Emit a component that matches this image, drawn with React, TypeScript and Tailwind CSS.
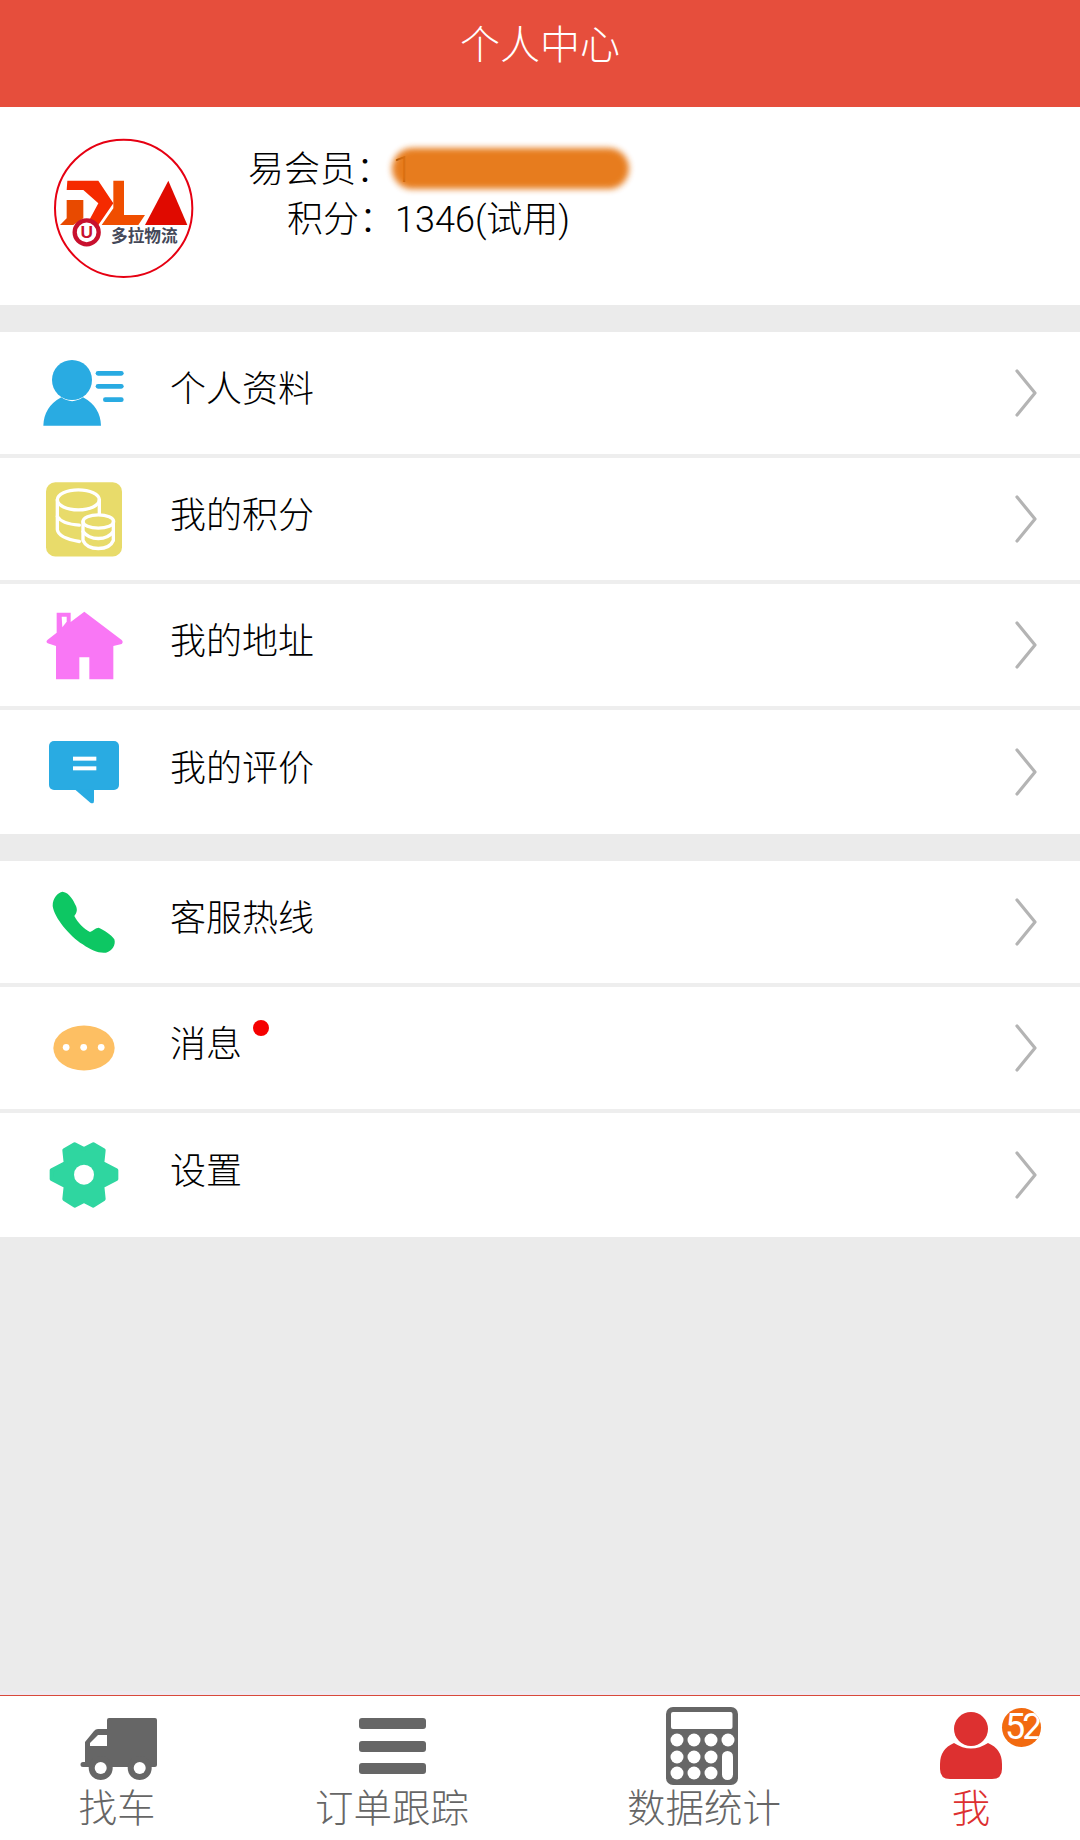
import React from "react";

const Chevron = () => (
  <svg width="24" height="50" viewBox="0 0 24 50" className="mr-[42px] shrink-0">
    <path d="M3 3L21 25L3 47" fill="none" stroke="#b4b4b4" strokeWidth="3.2" strokeLinecap="round" strokeLinejoin="round" />
  </svg>
);

const PersonIcon = () => (
  <svg width="82" height="66" viewBox="130 60 246 198">
    <circle cx="217" cy="120" r="60" fill="#29abe2" />
    <path d="M131 257Q133 200 185 172Q217 195 250 172Q302 200 304 257Z" fill="#29abe2" />
    <rect x="288" y="93" width="84" height="14" rx="7" fill="#29abe2" />
    <rect x="288" y="132" width="84" height="14" rx="7" fill="#29abe2" />
    <rect x="310" y="172" width="62" height="14" rx="7" fill="#29abe2" />
  </svg>
);

const CoinIcon = () => (
  <svg width="76" height="75" viewBox="138 427 228 224">
    <rect x="138" y="427" width="228" height="223" rx="28" fill="#e8db6a" />
    <g fill="none" stroke="#fff" strokeWidth="10" strokeLinecap="round">
      <ellipse cx="235" cy="480" rx="63" ry="30" />
      <path d="M172 480V570Q176 595 238 605" />
      <path d="M172 530Q185 552 238 556" />
      <path d="M298 480V520" />
      <ellipse cx="295" cy="545" rx="46" ry="20" />
      <path d="M249 545V602Q260 626 295 626Q330 626 340 602V545" />
      <path d="M249 575Q265 596 295 596Q325 596 340 575" />
    </g>
  </svg>
);

const HouseIcon = () => (
  <svg width="78" height="69" viewBox="135 813 234 207">
    <path
      d="M253 815L365 900Q371 906 365 912L340 918V1018H268V952H238V1018H168V918L143 910Q136 905 143 899L170 878V818H212V846Z"
      fill="#f977f5"
    />
    <path d="M185 830H200V845L187 862Z" fill="#fff" />
  </svg>
);

const BubbleIcon = () => (
  <svg width="70" height="63" viewBox="148 1203 210 189">
    <rect x="148" y="1203" width="210" height="147" rx="15" fill="#29abe2" />
    <path d="M225 1348L272 1388Q283 1394 283 1382V1348Z" fill="#29abe2" />
    <rect x="220" y="1250" width="70" height="12" fill="#fff" />
    <rect x="220" y="1279" width="70" height="12" fill="#fff" />
  </svg>
);

const PhoneIcon = () => (
  <svg width="64" height="63" viewBox="158 120 192 189">
    <path
      d="M190 122C175 125 160 140 160 165C165 200 210 255 250 280C275 298 300 308 320 305C340 300 350 280 345 265C335 250 315 238 298 230C290 230 280 240 272 243C255 235 235 215 225 195C232 185 235 178 230 165C222 148 210 125 190 122Z"
      fill="#0dc763"
    />
  </svg>
);

const MessageIcon = () => (
  <svg width="62" height="46" viewBox="160 525 184 134">
    <ellipse cx="252" cy="592" rx="91" ry="67" fill="#fdbf63" />
    <circle cx="199" cy="590" r="10" fill="#fff" />
    <circle cx="251" cy="590" r="10" fill="#fff" />
    <circle cx="303" cy="590" r="10" fill="#fff" />
  </svg>
);

const GearIcon = () => (
  <svg width="70" height="67" viewBox="147 877 210 201">
    <path
      d="M252 898L224 884L193 902L197 940L155 962V988L197 1010L193 1048L224 1068L252 1054L280 1068L311 1048L307 1010L349 988V962L307 940L311 902L280 884Z"
      fill="#2fd6a0"
      stroke="#2fd6a0"
      strokeWidth="12"
      strokeLinejoin="round"
    />
    <circle cx="252" cy="975" r="30" fill="#fff" />
  </svg>
);

const Logo = () => (
  <svg width="180" height="170" viewBox="0 0 540 510" className="shrink-0">
    <circle cx="281" cy="250" r="206" fill="none" stroke="#e60012" strokeWidth="6" />
    <path d="M112 167H205L250 235L205 300H170L205 235L160 195H110Z" fill="#f52a00" />
    <path d="M110 225H160V280L130 300H90L110 280Z" fill="#e84a00" />
    <path d="M250 167H282V270H345L325 300H215L250 250Z" fill="#f04e00" />
    <path d="M415 167L472 300H345Z" fill="#e00a00" />
    <circle cx="170" cy="322" r="36" fill="#fff" stroke="#c8102e" strokeWidth="13" />
    <text x="170" y="340" textAnchor="middle" fontSize="52" fontWeight="700" fontFamily="Liberation Sans, sans-serif" fill="#c8102e">U</text>
    <text x="243" y="350" fontSize="50" fontWeight="700" fontFamily="Noto Sans CJK SC, sans-serif" fill="#444858">多拉物流</text>
  </svg>
);

type RowProps = { icon: React.ReactNode; label: string; dot?: boolean; h: string };

const Row = ({ icon, label, dot, h }: RowProps) => (
  <div className={`flex items-center bg-white ${h}`}>
    <div className="flex w-[168px] shrink-0 justify-center">{icon}</div>
    <div className="relative ml-[2px] flex-1 pb-[6px] text-[36px] leading-[46px] font-light text-black">
      {label}
      {dot && <span className="absolute left-[83px] top-[-2px] h-[16px] w-[16px] rounded-full bg-[#f50000]" />}
    </div>
    <Chevron />
  </div>
);

const Sep = () => <div className="h-[4px] bg-[#eeeeee]" />;

const Gap = () => <div className="h-[27px] bg-[#ebebeb]" />;

type TabProps = { w: string; label: string; active?: boolean; labelClass?: string; children: React.ReactNode };

const Tab = ({ w, label, active, labelClass, children }: TabProps) => (
  <div className={`flex flex-col items-center pt-[8px] ${w}`}>
    <div className="relative flex h-[86px] items-center justify-center">{children}</div>
    <div className={`text-[38.5px] leading-[38px] font-light ${labelClass ?? ""} ${active ? "text-[#dd3030]" : "text-[#666666]"}`}>{label}</div>
  </div>
);

export default function App() {
  return (
    <div className="flex h-[1840px] w-[1080px] flex-col overflow-hidden bg-[#ebebeb] font-[Roboto,'Noto_Sans_CJK_SC',sans-serif]">
      <div className="flex h-[107px] shrink-0 justify-center bg-[#e64e3c] pt-[22px] text-[40px] leading-[48px] font-light text-white">
        个人中心
      </div>

      <div className="flex h-[198px] shrink-0 items-start bg-white pl-[30px] pt-[18px]">
        <Logo />
        <div className="ml-[38px] pt-[20px] text-[36px] leading-[50px] font-light text-black">
          <div className="relative flex">
            <span className="w-[144px] text-right">易会员：</span>
            <span className="ml-[1px]">1</span>
            <span className="absolute left-[144px] top-[3px] h-[41px] w-[237px] rounded-full bg-[#e67612] opacity-95 blur-[3px]" />
          </div>
          <div className="flex">
            <span className="w-[147px] text-right">积分：</span>
            <span>1346(试用)</span>
          </div>
        </div>
      </div>

      <Gap />
      <Row h="h-[122px]" icon={<PersonIcon />} label="个人资料" />
      <Sep />
      <Row h="h-[122px]" icon={<CoinIcon />} label="我的积分" />
      <Sep />
      <Row h="h-[122px]" icon={<HouseIcon />} label="我的地址" />
      <Sep />
      <Row h="h-[124px]" icon={<BubbleIcon />} label="我的评价" />
      <Gap />
      <Row h="h-[122px]" icon={<PhoneIcon />} label="客服热线" />
      <Sep />
      <Row h="h-[122px]" icon={<MessageIcon />} label="消息" dot />
      <Sep />
      <Row h="h-[124px]" icon={<GearIcon />} label="设置" />

      <div className="flex-1 border-b-[4px] border-[#eeeaf0]" />

      <div className="flex h-[145px] shrink-0 border-t-[1px] border-[#d9483c] bg-white">
        <Tab w="w-[234px]" label="找车">
          <svg width="78" height="65" viewBox="0 0 78 65" className="ml-[3px] mt-[2px]">
            <path d="M29 2H75a2 2 0 0 1 2 2V49a2 2 0 0 1-2 2H3a2 2 0 0 1 0-5H5V26L14 15a5 5 0 0 1 4-2H27V4a2 2 0 0 1 2-2Z" fill="#666" />
            <path d="M27 19H18L10 27V30H27Z" fill="#fff" />
            <circle cx="20.7" cy="52" r="12" fill="#666" />
            <circle cx="20.7" cy="52" r="6" fill="#fff" />
            <circle cx="59.7" cy="52" r="12" fill="#666" />
            <circle cx="59.7" cy="52" r="6" fill="#fff" />
          </svg>
        </Tab>
        <Tab w="w-[316px]" label="订单跟踪">
          <svg width="67" height="56" viewBox="0 0 67 56" className="mb-[2px]">
            <rect width="67" height="11" rx="3" fill="#666" />
            <rect y="23" width="67" height="11" rx="3" fill="#666" />
            <rect y="45" width="67" height="11" rx="3" fill="#666" />
          </svg>
        </Tab>
        <Tab w="w-[304px]" label="数据统计" labelClass="pl-[4px]">
          <svg width="72" height="78" viewBox="0 0 72 78" className="mb-[2px]">
            <rect width="72" height="78" rx="7" fill="#666" />
            <rect x="5" y="5" width="61.5" height="17" rx="2" fill="#fff" />
            {[33, 50, 66].map((y) =>
              [11, 28, 45].map((x) => <circle key={`${x}-${y}`} cx={x} cy={y} r="6.5" fill="#fff" />)
            )}
            <circle cx="62" cy="33" r="6.5" fill="#fff" />
            <rect x="56" y="44" width="11" height="29" rx="5.5" fill="#fff" />
          </svg>
        </Tab>
        <Tab w="w-[226px] pl-[8px]" label="我" active>
          <svg width="62" height="68" viewBox="0 0 62 68" className="mb-[2px]">
            <circle cx="31" cy="17" r="17" fill="#dd3030" />
            <path d="M14 31Q31 42 48 31Q62 37 62 52V57Q62 67 52 67H10Q0 67 0 57V52Q0 37 14 31Z" fill="#dd3030" />
          </svg>
          <span className="absolute left-[62px] top-[4px] h-[39px] w-[39px] overflow-hidden rounded-full bg-[#f26a0f] pl-[3px] text-[36px] leading-[39px] tracking-[-3px] text-white">
            52
          </span>
        </Tab>
      </div>
    </div>
  );
}
